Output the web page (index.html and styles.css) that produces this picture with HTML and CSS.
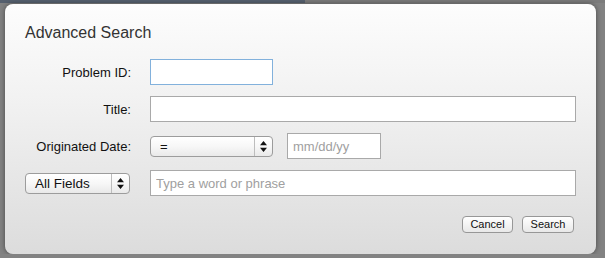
FILE: index.html
```html
<!DOCTYPE html>
<html lang="en">
<head>
    <meta charset="UTF-8">
    <meta name="viewport" content="width=device-width, initial-scale=1.0">
    <title>Advanced Search</title>
    <link rel="stylesheet" href="styles.css">
</head>
<body>
    <div class="dialog">
        <h1 class="dialog-title">Advanced Search</h1>

        <div class="form-grid">
            <label class="field-label" for="problem-id">Problem ID:</label>
            <input class="text-input input-short is-focused" id="problem-id" type="text">

            <label class="field-label" for="title">Title:</label>
            <input class="text-input" id="title" type="text">

            <label class="field-label">Originated Date:</label>
            <div class="date-row">
                <div class="popup popup-op">
                    <span class="popup-value">=</span>
                    <span class="popup-arrows">
                        <svg width="7" height="11" viewBox="0 0 7 11"><path d="M3.5 0 L7 4.2 H0 Z M0 6.8 H7 L3.5 11 Z" fill="#111"/></svg>
                    </span>
                </div>
                <input class="text-input input-date" type="text" placeholder="mm/dd/yy">
            </div>

            <div class="popup popup-fields">
                <span class="popup-value">All Fields</span>
                <span class="popup-arrows">
                    <svg width="7" height="11" viewBox="0 0 7 11"><path d="M3.5 0 L7 4.2 H0 Z M0 6.8 H7 L3.5 11 Z" fill="#111"/></svg>
                </span>
            </div>
            <input class="text-input" type="text" placeholder="Type a word or phrase">
        </div>

        <div class="dialog-actions">
            <button class="btn btn-cancel" type="button">Cancel</button>
            <button class="btn btn-search" type="button">Search</button>
        </div>
    </div>
</body>
</html>
```

FILE: styles.css
```css
body {
    font-family: 'Liberation Sans', Arial, sans-serif;
    margin: 0;
    padding: 4px 0 0 5px;
    background: linear-gradient(to right, #56606e 0, #56606e 305px, #7b7b7b 305px) top left / 100% 3px no-repeat, #828282;
    color: #1a1a1a;
}
.dialog {
    width: 591px;
    box-sizing: border-box;
    padding: 19px 20px 21px 20px;
    border-radius: 8px;
    background: linear-gradient(#fdfdfd, #f1f1f1 40%, #dcdcdc);
    box-shadow: 0 0 5px rgba(0, 0, 0, 0.45);
}
.dialog-title {
    margin: 0 0 16px 0;
    font-size: 16px;
    line-height: 20px;
    font-weight: normal;
    color: #333;
}
.form-grid {
    display: grid;
    grid-template-columns: 106px 426px;
    grid-auto-rows: 26px;
    column-gap: 19px;
    row-gap: 11px;
    align-items: center;
}
.field-label {
    font-size: 13px;
    text-align: right;
    color: #111;
}
.text-input {
    box-sizing: border-box;
    height: 26px;
    width: 100%;
    margin: 0;
    padding: 0 5px;
    border: 1px solid #a9a9a9;
    border-radius: 0;
    background-color: #fff;
    font-family: 'Liberation Sans', Arial, sans-serif;
    font-size: 13px;
    color: #222;
    outline: none;
}
.text-input::placeholder {
    color: #a0a0a0;
}
.input-short {
    width: 123px;
}
.is-focused {
    border-color: #82b1dc;
}
.date-row {
    display: flex;
    align-items: center;
    gap: 14px;
}
.input-date {
    width: 94px;
}
.popup {
    box-sizing: border-box;
    display: flex;
    align-items: stretch;
    height: 21px;
    border: 1px solid #9c9c9c;
    border-radius: 4px;
    background: linear-gradient(#ffffff, #f7f7f7 50%, #e9e9e9);
    font-size: 13px;
    color: #111;
}
.popup-value {
    flex: 1;
    display: flex;
    align-items: center;
    padding-left: 9px;
}
.popup-arrows {
    width: 17px;
    display: flex;
    align-items: center;
    justify-content: center;
    border-left: 1px solid #bdbdbd;
}
.popup-op {
    width: 123px;
}
.popup-fields {
    width: 105px;
    height: 21px;
    font-size: 13.5px;
}
.dialog-actions {
    display: flex;
    justify-content: flex-end;
    gap: 9px;
    margin-top: 20px;
    padding-right: 2px;
}
.btn {
    box-sizing: border-box;
    height: 17px;
    margin: 0;
    padding: 0;
    border: 1px solid #979797;
    border-radius: 4px;
    background: linear-gradient(#ffffff, #f4f4f4 50%, #e8e8e8);
    font-family: 'Liberation Sans', Arial, sans-serif;
    font-size: 11px;
    line-height: 15px;
    color: #111;
}
.btn-cancel {
    width: 51px;
}
.btn-search {
    width: 52px;
}
```
